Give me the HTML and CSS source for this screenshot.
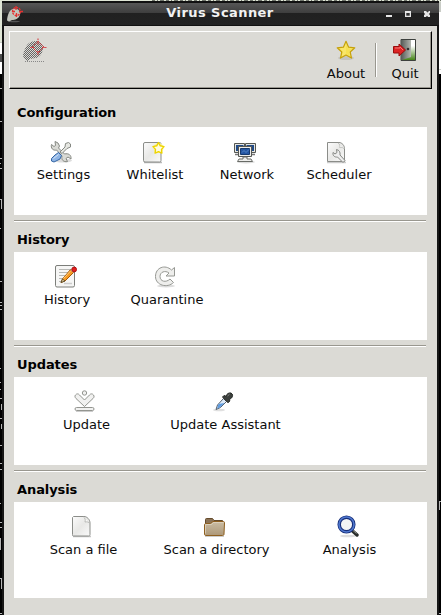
FILE: index.html
```html
<!DOCTYPE html>
<html lang="en">
<head>
<meta charset="utf-8">
<title>Virus Scanner</title>
<link rel="stylesheet" href="styles.css">
</head>
<body>
<svg class="backdrop" width="441" height="615" viewBox="0 0 441 615" shape-rendering="crispEdges" aria-hidden="true">
  <path fill="#000" d="M0 0h441v615H0z"/>
  <path fill="#dfe5d5" d="M0 0h441v2H0zM0 0h3v42H0z"/>
  <path stroke="#70756c" stroke-dasharray="3 2 1 2 4 2" d="M152 .5h289"/>
  <path fill="#fff" d="M0 42h3v32H0zM438 12h3v62h-3z"/>
  <path fill="#c9ccc6" d="M438 2h3v10h-3zM438 69h3v1h-3zM0 42h3v1H0z"/>
  <path fill="#4d4d4d" d="M0 54h2v8H0z"/>
  <path stroke="#b5b5b5" d="M0 88.500h2M0 121.500h2M0 158.500h2M0 163.500h1M0 168.500h2M0 199.500h2M1.500 200v9M0 228.500h1M0 281.500h2M0 302.500h2M0 305.500h2M0 309.500h2M0 368.500h1M0 382.500h1M0 389.500h1M0 398.500h2M1.500 404v6M0 418.500h2M1.500 424v5M0 445.500h2M0 463.500h2M0 469.500h2M0 503.500h1M0 522.500h2M0 527.500h2M.5 538v12M0 578.500h2M1.500 579v10M0 613.500h2M439.500 502v8M439 501.500h2M439 613.500h2"/>
</svg>
<div class="window">
  <header class="titlebar">
    <svg class="app-icon" width="18" height="18" viewBox="0 0 18 18">
      <ellipse cx="8" cy="16.500" rx="6" ry=".7" fill="#555"/>
      <path fill="#c3c5bc" d="M1 15.500C1.500 9 4 4 8 3.500c4-.5 7 3 6 6.500-1.500 4-5 5-8 5L3 16.500z"/>
      <g fill="none" stroke="#e33131" stroke-width="1.300"><circle cx="10.500" cy="6.500" r="4" stroke-dasharray="2 1"/><path d="M10 1v4M13 6.500h4M6 6.500h3M10.500 8v4"/></g>
    </svg>
    <h1>Virus Scanner</h1>
    <svg class="controls" width="46" height="12" viewBox="0 0 46 12" fill="#e5e5e5">
      <path d="M1 8h6v2H1zM20 4h6v6h-6zM39 4h2l1.500 1.500L44 4h1v2l-1.200 1L45 8v2h-2l-1-1.200L41 10h-2V8l1.200-1L39 6z"/>
      <path fill="#303030" d="M21.300 6h3.400v2.700h-3.400z"/>
    </svg>
  </header>
  <nav class="toolbar">
    <svg class="logo" width="24" height="26" viewBox="0 0 24 26">
      <defs><pattern id="check" width="2" height="2" patternUnits="userSpaceOnUse"><path fill="#666" d="M0 0h1v1H0zM1 1h1v1H1z"/></pattern></defs>
      <path fill="url(#check)" d="M0 17c2-6 3-11 8-13 5-2 10-1 12 4 0 6-2 11-7 12l-6 1-2 2C2 22 0 20 0 17z"/>
      <g fill="none" stroke="#cf2d32" stroke-dasharray="1.500 .8"><path d="M15 3.500l6 5.500-6 6-6-6zM15 .5v6M19 9.500h5M7 9.500h5M15 13v4"/></g>
      <path stroke="#888" stroke-dasharray="1 1" d="M2 23.500h19"/>
    </svg>
    <div class="tool about">
      <svg width="24" height="24" viewBox="0 0 24 24">
        <ellipse cx="12" cy="20" rx="8" ry="2" fill="#c5c4bf"/>
        <path d="M12 3.300l2.600 5.900 6.200.6-4.600 4.200 1.300 6.100-5.500-3.100-5.500 3.100 1.300-6.100-4.600-4.200 6.200-.6z" fill="#f9e66a" stroke="#c6a10b" stroke-width="1.200" stroke-linejoin="round"/>
        <path d="M12 5.800l1.800 4.400 4.200.5-3.200 2.800.8 4.200L12 15.500z" fill="#f5dc3c" opacity=".5"/>
      </svg>
      <span>About</span>
    </div>
    <i class="divider"></i>
    <div class="tool quit">
      <svg width="24" height="24" viewBox="0 0 24 24">
        <defs><linearGradient id="outside" x2="0" y2="1"><stop offset=".3" stop-color="#fff"/><stop offset="1" stop-color="#3f8010"/></linearGradient>
        <linearGradient id="door"><stop stop-color="#555a56"/><stop offset="1" stop-color="#b4b8b1"/></linearGradient></defs>
        <path d="M8 1.500h14.500v21H8z" fill="url(#outside)" stroke="#3d403d"/>
        <path d="M8 2h10v17l-9 3H8z" fill="url(#door)"/>
        <circle cx="15" cy="11" r="1.300" fill="#333"/>
        <path d="M.5 8.500H6V6l6.500 6L6 18v-3H.5z" fill="#dc2424" stroke="#980d0d"/><path d="M2 10h5V9l3 3" fill="none" stroke="#f47777"/>
      </svg>
      <span>Quit</span>
    </div>
  </nav>
  <main>
    <section class="config">
      <h2>Configuration</h2>
      <div class="panel">
        <div class="item">
          <svg width="24" height="24" viewBox="0 0 24 24">
            <ellipse cx="14" cy="20.500" rx="9" ry="2" fill="#ddd"/>
            <path d="M6 1.500l3 1.500 1.500 3-1 2 6 6c4-1 7 1 6.500 5l-3-2-2 1.500 1.500 3c-4 1-6.500-2-5.500-5.500L7.500 10C4 11 1.500 8 2.500 4.500L5 6.500l1.500-1z" fill="#d9dad5" stroke="#858882"/>
            <path d="M11 12l5-5 .5-3.500 3-1L21.500 4v3l-3.500 1.500-5 5z" fill="#e6e7e2" stroke="#858882"/>
            <path d="M9.500 12.500l3 3-1.500 3.500L5 22l-2.500-1v-2.500L6 15z" fill="#8fb5e5" stroke="#3465a4"/><path d="M4.500 18.500l5-4" stroke="#d6e5f7"/>
          </svg>
          <span>Settings</span>
        </div>
        <div class="item">
          <svg width="24" height="24" viewBox="0 0 24 24">
            <defs><linearGradient id="paper" x2="1" y2="1"><stop stop-color="#fcfcfc"/><stop offset=".5" stop-color="#e8e8e6"/><stop offset="1" stop-color="#fafafa"/></linearGradient></defs>
            <path d="M3 22.500h18" stroke="#bbb" stroke-width="1.500"/>
            <rect x="2.500" y="2.500" width="17.500" height="19.500" rx="1.500" fill="url(#paper)" stroke="#8b8d89"/>
            <circle cx="17.500" cy="8" r="5" fill="#fff6a5"/>
            <path d="M17.500 2.500l1.800 3.300 3.700.8-2.500 2.800.4 3.700-3.400-1.500-3.400 1.500.4-3.700L12 6.600l3.700-.8z" fill="#fffce0" stroke="#edd400" stroke-width="1.400" stroke-linejoin="round"/>
          </svg>
          <span>Whitelist</span>
        </div>
        <div class="item">
          <svg width="24" height="24" viewBox="0 0 24 24">
            <ellipse cx="13" cy="22" rx="9" ry="1.500" fill="#ddd"/>
            <path d="M1.500 3.500h10v9h-10zM12.500 3.500h10v9h-10z" fill="#e5e6e1" stroke="#555753"/>
            <path d="M3 5h7.500v6H3zM13.500 5H21v6h-7.500z" fill="#204a87"/>
            <path d="M2 14.500h5M18 14.500h4" stroke="#777" stroke-width="1.500"/>
            <path d="M5.500 6.500h13v10h-13z" fill="#eeeeec" stroke="#555753"/><path d="M7.500 8.500h9v6h-9z" fill="#2456a3" stroke="#173b70"/><path d="M9 12.500l2-2 2 2 3-3" fill="none" stroke="#5587c7"/>
            <path d="M10 17h4v2h4l1.500 2.500h-15L6 19h4z" fill="#eeeeec" stroke="#686b66"/>
          </svg>
          <span>Network</span>
        </div>
        <div class="item scheduler">
          <svg width="24" height="24" viewBox="0 0 24 24">
            <path d="M3 22.500h19" stroke="#ccc" stroke-width="1.500"/>
            <path d="M3.500 2.500H15c3 0 5.500 3 5.500 6v13h-17z" fill="url(#paper)" stroke="#8b8d89"/>
            <path d="M14 3c2 1 2 3 1.500 4.500 2-.5 4 0 4.500 1.500" fill="#fff" stroke="#c3c4c1"/>
            <path d="M12.500 9.500l.5 3-2 1.500-2-1.500c-.5 3 1.500 5 4.500 4.500l5.500 5.500 2-2-5-5.500c.5-3-1-5-3.500-5.500z" fill="#eee" stroke="#858783"/>
          </svg>
          <span>Scheduler</span>
        </div>
      </div>
    </section>
    <hr>
    <section class="history">
      <h2>History</h2>
      <div class="panel">
        <div class="item">
          <svg width="24" height="24" viewBox="0 0 24 24">
            <rect x="2.500" y="1.500" width="19" height="21.500" rx="1.500" fill="#f6f6f5" stroke="#7c7e7a"/>
            <path d="M6 5.500h11M6 8.500h11M6 11.500h7M6 14.500h4M6 17.500h4" stroke="#b8b9b6"/>
            <path d="M11 19.500h8" stroke="#ccc" stroke-width="1.500"/>
            <path d="M18 5l3 3-9 9-4 1.500L9.500 15z" fill="#f59a24" stroke="#a65705"/><path d="M17.500 7l-7 7.500" stroke="#ffd080"/>
            <path d="M9.500 15L8 18.500l4-1.500z" fill="#ead3a2" stroke="#4d4225" stroke-width=".8"/><path d="M18 5l3 3" stroke="#bbb" stroke-width="2"/><circle cx="21.200" cy="5.500" r="2.400" fill="#e02020" stroke="#a40000" stroke-width=".8"/>
          </svg>
          <span>History</span>
        </div>
        <div class="item">
          <svg width="24" height="24" viewBox="0 0 24 24">
            <ellipse cx="13" cy="22" rx="9" ry="1.500" fill="#ddd"/>
            <path d="M21.500 3.500v8.500h-8.500l3-3c-4-3-9-1-9 3.500 0 5 6 6.500 10 2.500l3.500 3.500c-6 6-18 3-18-6C2.500 3.500 12 0 18.500 6z" fill="#eeeeec" stroke="#969893" stroke-linejoin="round"/>
          </svg>
          <span>Quarantine</span>
        </div>
      </div>
    </section>
    <hr>
    <section class="updates">
      <h2>Updates</h2>
      <div class="panel">
        <div class="item">
          <svg width="24" height="24" viewBox="0 0 24 24">
            <g fill="#f1f1f0" stroke="#939590"><circle cx="12.500" cy="4" r="2.200"/><path d="M3.500 6c1-1.500 3-1.500 4 0l5 5 5-5c1-1.500 3-1.500 4 0s.5 2.500-.5 3.500l-8.500 8-8.500-8c-1-1-1.500-2.500-.5-3.500z"/><rect x="3" y="18.500" width="19" height="3" rx="1.500"/></g>
            <path d="M4 22.500h17" stroke="#ccc"/>
          </svg>
          <span>Update</span>
        </div>
        <div class="item assistant">
          <svg width="24" height="24" viewBox="0 0 24 24">
            <ellipse cx="8" cy="21" rx="6" ry="1.300" fill="#e0e0e0"/>
            <path d="M12.500 9.500l3 3-6 6-4.500 2 1.500-4.500z" fill="#dceaf9" stroke="#56606b"/><path d="M7.500 15l6-1-4 4-3.500 1.800z" fill="#5e9be0"/>
            <path d="M11.500 8l1.500-1.500 2 .8c.5-2.500 3-3.800 5-3.300 2 1 2 3.500.5 5L18.500 10.500l.3 1.500-1.800 1.800z" fill="#3c403d" stroke="#232623"/><path d="M16.500 7l2-1.700" stroke="#888"/>
          </svg>
          <span>Update Assistant</span>
        </div>
      </div>
    </section>
    <hr>
    <section class="analysis">
      <h2>Analysis</h2>
      <div class="panel">
        <div class="item">
          <svg width="24" height="24" viewBox="0 0 24 24">
            <path d="M4 22.500h18" stroke="#c5c5c5" stroke-width="1.500"/>
            <path d="M4.500 2.500H15c3 0 6 3 6 6.500v11.500c0 1-.5 1.500-1.500 1.500h-15c-1 0-1-.5-1-1.500V3.500z" fill="url(#paper)" stroke="#8b8d89"/>
            <path d="M14.500 3c2 1.500 2 3 1.500 5 2-.5 4 0 4.500 1.500" fill="#fff" stroke="#b9bab7"/>
          </svg>
          <span>Scan a file</span>
        </div>
        <div class="item">
          <svg width="24" height="24" viewBox="0 0 24 24">
            <defs><linearGradient id="folder" x2="0" y2="1"><stop stop-color="#cbbda4"/><stop offset="1" stop-color="#ad9878"/></linearGradient></defs>
            <path d="M3 22.500h19" stroke="#ccc"/>
            <path d="M3.500 13V5.500c0-.8.500-1 1-1h6l1.500 2h8.500v7z" fill="#8b7255" stroke="#654b2c"/>
            <path d="M2.500 11c0-1 .5-1.500 1.500-1.500h4.500L11 7.500h10.500c.8 0 1 .5 1 1.500l-.5 11c0 1-.5 1.500-1.500 1.500H4c-1 0-1.500-.5-1.500-1.500z" fill="url(#folder)" stroke="#8f6020"/>
            <path d="M3.500 19.500v-9h6L11.500 8.500h10" fill="none" stroke="#e2d8c7" stroke-width=".7"/>
          </svg>
          <span>Scan a directory</span>
        </div>
        <div class="item">
          <svg width="24" height="24" viewBox="0 0 24 24">
            <ellipse cx="13" cy="22" rx="8" ry="1.300" fill="#ddd"/>
            <path d="M17 16.500l5 4.500" stroke="#292d2a" stroke-width="3.400" stroke-linecap="round"/><path d="M17.500 16l4 3.500" stroke="#8d908b"/>
            <circle cx="11.500" cy="10.500" r="7.300" fill="#f3f4f5" stroke="#172f7a" stroke-width="3.500"/><circle cx="11.500" cy="10.500" r="7.500" fill="none" stroke="#5078cf" stroke-width="1.600"/>
          </svg>
          <span>Analysis</span>
        </div>
      </div>
    </section>
  </main>
</div>
</body>
</html>
```
FILE: styles.css
```css
* { box-sizing: border-box; }

body {
  margin: 0;
  width: 441px;
  height: 615px;
  overflow: hidden;
  font: 13px/16px "DejaVu Sans", sans-serif;
  color: #0c0c0c;
}

svg { display: block; }

.backdrop { position: absolute; z-index: -1; }

.window {
  width: 437px;
  height: 614px;
  margin: 1px 0 0 2px;
  border: solid #161616;
  border-width: 0 2px;
  background: #dbdad5;
}

.titlebar {
  height: 25px;
  margin: 0 -2px;
  padding: 0 8px 0 4px;
  display: flex;
  align-items: center;
  justify-content: space-between;
  border: solid #111;
  border-width: 2px 0 1px;
  background: linear-gradient(#565656, #3e3e3e 45%, #202020 46%, #222);
}

.titlebar h1 {
  margin: 0 0 2px 31px;
  color: #f2f2f2;
  font-size: 13px;
  line-height: 18px;
  letter-spacing: .43px;
}

.controls { margin-bottom: 2px; }

.toolbar {
  display: flex;
  height: 58px;
  margin: 5px 5px 0;
  border: 1px solid;
  border-color: #fff #000 #000 #fff;
  box-shadow: inset -1px -1px #99978f;
}

.logo { margin: 6px auto 0 13px; }

.tool {
  width: 50px;
  padding-top: 6px;
  display: flex;
  flex-direction: column;
  align-items: center;
}

.tool span { margin-top: 4px; }

.about { margin-right: 4px; }

.divider {
  width: 2px;
  height: 34px;
  margin: 11px 3px 0 0;
  border-left: 1px solid #99978f;
  border-right: 1px solid #fff;
}

.quit { margin-right: 1px; }

main { padding: 6px 10px 0; }

h2 {
  margin: 0;
  height: 32px;
  padding: 10px 3px 0;
  font-size: 13px;
  line-height: 16px;
  letter-spacing: -.09px;
  color: #000;
}

.panel {
  display: flex;
  width: 413px;
  height: 88px;
  padding: 13px 0 0 3px;
  background: #fff;
}

.analysis .panel { height: 96px; }

.item {
  width: 92px;
  display: flex;
  flex-direction: column;
  align-items: center;
  white-space: nowrap;
}

.history .item { width: 100px; }
.updates .item { width: 139px; }
.analysis .item { width: 133px; }

.item svg { margin-right: 4px; }
.item.scheduler svg { margin-right: 6px; }
.history .item svg,
.updates .item svg,
.analysis .item svg { margin: -1px 5px 1px 0; }
.updates .item svg { margin-right: 6px; }
.item span { margin: 3px 0 0; }
.config .item:first-child span { margin-left: 1px; }

hr {
  width: 412px;
  height: 2px;
  margin: 5px 0 0;
  border: solid;
  border-width: 1px 0;
  border-color: #99978f transparent #fff;
}

hr + section { margin-top: -2px; }
hr + section h2 { padding-top: 12px; }
```
